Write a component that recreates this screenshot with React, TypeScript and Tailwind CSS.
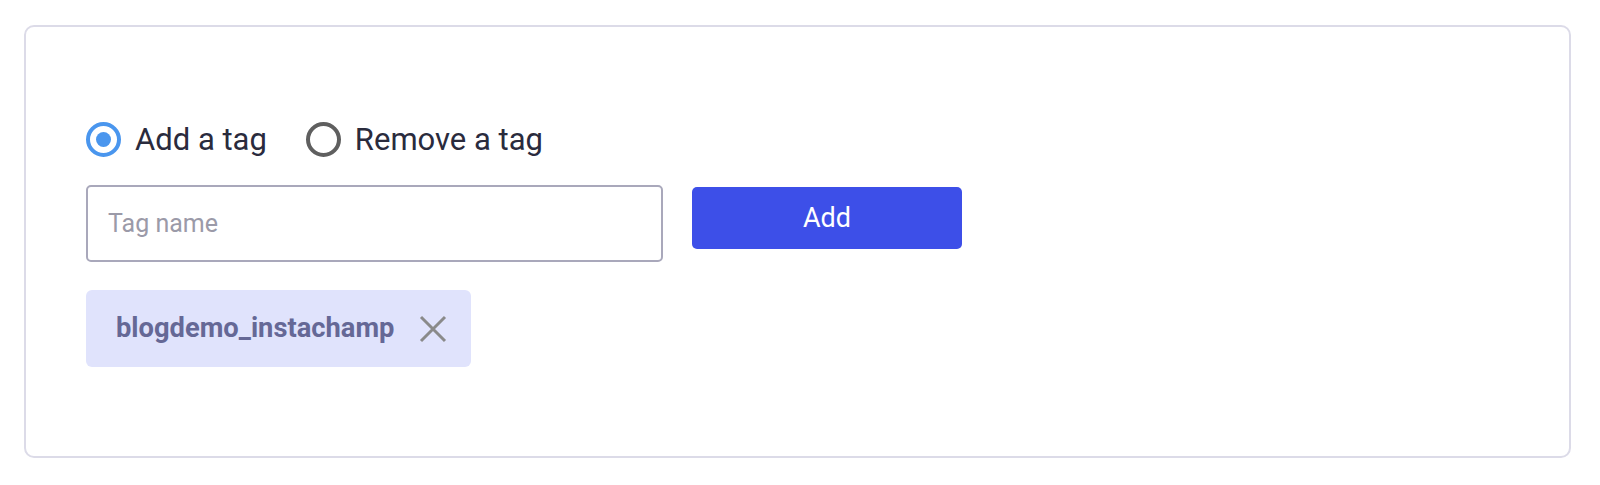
import { useState } from "react";

export default function App() {
  const [mode, setMode] = useState<"add" | "remove">("add");
  const [tagName, setTagName] = useState("");
  const [tags, setTags] = useState<string[]>(["blogdemo_instachamp"]);

  const handleAdd = () => {
    const name = tagName.trim();
    if (!name) return;
    setTags((prev) => (prev.includes(name) ? prev : [...prev, name]));
    setTagName("");
  };

  return (
    <div className="w-[1600px] h-[485px] bg-white pt-[25px] pl-[24px] font-['Roboto',sans-serif]">
      <div className="w-[1547px] h-[433px] border-2 border-[#dcdbe8] rounded-[10px] pt-[95px] pl-[60px]">
        <div className="flex items-center gap-[39px]">
          {(["add", "remove"] as const).map((m) => {
            const active = mode === m;
            return (
              <button
                key={m}
                type="button"
                onClick={() => setMode(m)}
                className="flex items-center gap-[14px]"
              >
                <span
                  className={`w-[35px] h-[35px] rounded-full border-[4px] flex items-center justify-center ${
                    active ? "border-[#4a96ee]" : "border-[#5f5f5f]"
                  }`}
                >
                  {active && <span className="w-[15px] h-[15px] rounded-full bg-[#4a96ee]" />}
                </span>
                <span className="text-[31px] text-[#2a2b3d] leading-none">
                  {m === "add" ? "Add a tag" : "Remove a tag"}
                </span>
              </button>
            );
          })}
        </div>

        <div className="flex items-start gap-[29px] mt-[28px]">
          <input
            type="text"
            value={tagName}
            onChange={(e) => setTagName(e.target.value)}
            onKeyDown={(e) => e.key === "Enter" && handleAdd()}
            placeholder="Tag name"
            className="w-[577px] h-[77px] border-2 border-[#a9a8bb] rounded-[5px] px-[20px] text-[25px] text-[#2a2b3d] placeholder:text-[#9b9aa8] outline-none"
          />
          <button
            type="button"
            onClick={handleAdd}
            className="mt-[2px] w-[270px] h-[62px] bg-[#3d4fe8] rounded-[5px] text-white text-[27px]"
          >
            Add
          </button>
        </div>

        <div className="flex flex-wrap gap-3 mt-[28px]">
          {tags.map((t) => (
            <div
              key={t}
              className="h-[77px] bg-[#e0e3fc] rounded-[6px] flex items-center pl-[30px] pr-[24px] gap-[25px]"
            >
              <span className="text-[27.3px] font-bold text-[#656896]">{t}</span>
              <button
                type="button"
                onClick={() => setTags((prev) => prev.filter((x) => x !== t))}
                className="text-[#8a8a8a]"
              >
                <svg width="28" height="28" viewBox="0 0 28 28" fill="none" stroke="currentColor" strokeWidth="3">
                  <path d="M2 2L26 26M26 2L2 26" />
                </svg>
              </button>
            </div>
          ))}
        </div>
      </div>
    </div>
  );
}
